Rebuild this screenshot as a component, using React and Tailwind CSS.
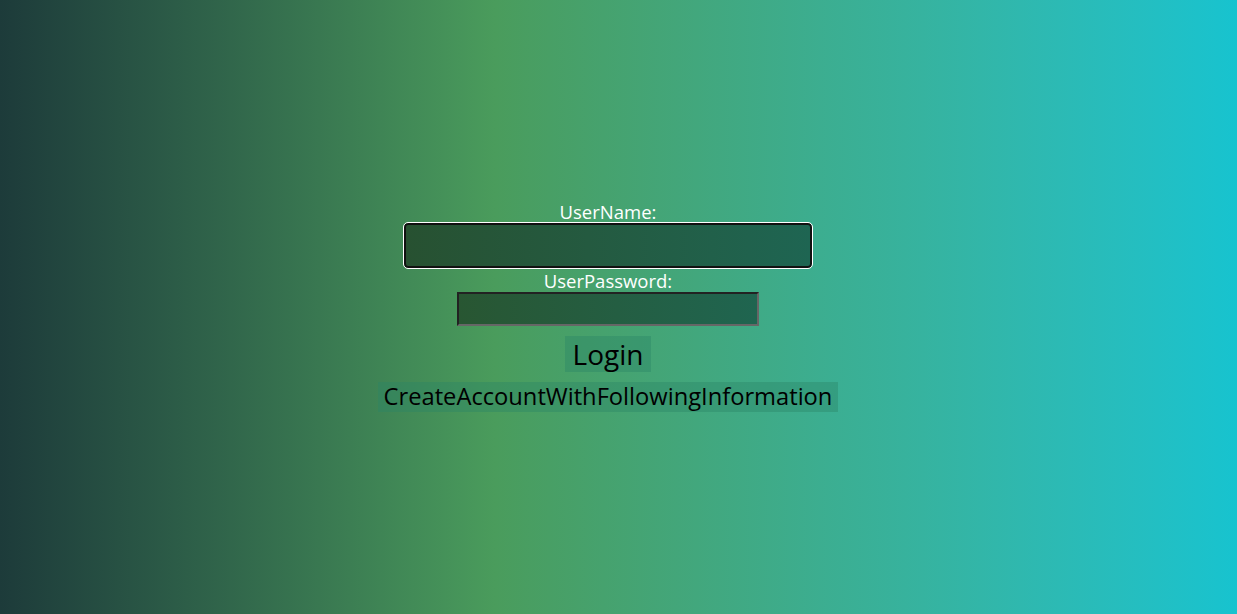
import React from "react";

const App = () => {
  return (
    <div className="w-full h-screen bg-gradient-to-r from-[#1d3b3a] via-[#4a9c5c] via-40% to-[#17c3cf] flex flex-col items-center justify-center pr-[21px] font-['Open_Sans',sans-serif]">
      <div className="flex flex-col items-center">
        <label className="h-[20px] text-white text-[18.5px] leading-[20px]">UserName:</label>
        <input
          type="text"
          className="mt-[1px] w-[408px] h-[45px] rounded-[4px] border-2 border-[#111] outline outline-1 outline-white bg-gradient-to-r from-[#275131] to-[#1e6552]"
        />
        <label className="mt-[3px] h-[20px] text-white text-[18.5px] leading-[20px]">UserPassword:</label>
        <input
          type="password"
          className="mt-[1px] w-[302px] h-[34px] border-2 border-t-[#222] border-l-[#222] border-b-[#666] border-r-[#666] bg-gradient-to-r from-[#285632] to-[#1f6550] outline-none"
        />
        <button className="mt-[10px] h-[36px] px-[8px] bg-[#2a8466]/40 text-black text-[28px] leading-none">
          Login
        </button>
        <button className="mt-[10px] h-[30px] px-[6px] bg-[#2a8466]/40 text-black text-[23.7px] leading-none">
          CreateAccountWithFollowingInformation
        </button>
      </div>
    </div>
  );
};

export default App;
